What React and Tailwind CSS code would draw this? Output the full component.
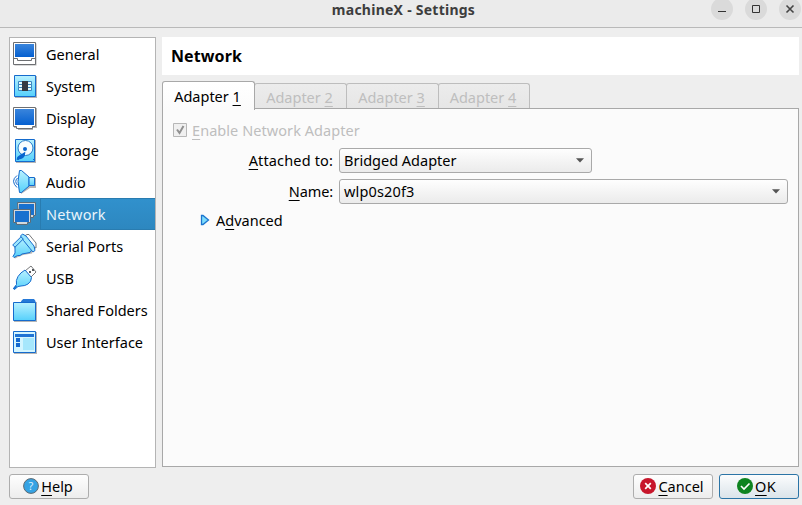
import React from "react";

function Gradients() {
  return (
    <svg width="0" height="0" className="absolute">
      <defs>
        <linearGradient id="cyan" x1="0" y1="0" x2="0" y2="1">
          <stop offset="0" stopColor="#b9f1ff" />
          <stop offset="1" stopColor="#55d0fb" />
        </linearGradient>
        <linearGradient id="blue" x1="0" y1="0" x2="0" y2="1">
          <stop offset="0" stopColor="#3a85dc" />
          <stop offset="1" stopColor="#0560d0" />
        </linearGradient>
      </defs>
    </svg>
  );
}

function Icon({ children }) {
  return (
    <svg width="26" height="26" viewBox="0 0 26 26" fill="none" className="ml-[2px] shrink-0">
      {children}
    </svg>
  );
}

const MonitorFull = () => (
  <Icon>
    <path d="M2.5 2.5h22v22h-22z" fill="#b5b5b5" />
    <path d="M1.5 1.5h22v22h-22z" fill="#fff" stroke="#6d6f72" />
    <path d="M3 3h19v13H3z" fill="url(#blue)" />
    <path d="M2 17.5h3.5v2h14v-2H23" stroke="#6d6f72" />
  </Icon>
);
const MonitorLow = () => (
  <Icon>
    <path d="M2 3h23v20h-4v2H6v-2H2z" fill="#b5b5b5" />
    <path d="M1.5 2.5h22v19h-3v2h-16v-2h-3z" fill="#fff" stroke="#6d6f72" />
    <path d="M3 4h19v16H3z" fill="url(#blue)" />
  </Icon>
);
const Chip = () => (
  <Icon>
    <path d="M3 3h22v22H3z" fill="#b5b5b5" />
    <path d="M2.5 2.5h21v21h-21z" fill="url(#cyan)" stroke="#156bcd" />
    <path d="M6.500 8.500h4v3h-4zm0 3h4v3h-4zm0 3h4v3h-4zM15.500 8.500h4v3h-4zm0 3h4v3h-4zm0 3h4v3h-4z" fill="#e6fbff" stroke="#3b86c0" />
    <path d="M10 8h6v10h-6z" fill="#353a43" />
  </Icon>
);
const Disk = () => (
  <Icon>
    <path d="M4 3h20v23H4z" fill="#b5b5b5" />
    <path d="M3.500 2.500h19v22h-19z" fill="url(#cyan)" stroke="#156bcd" />
    <circle cx="13.500" cy="11" r="7.500" fill="#f5fdff" stroke="#277ac9" />
    <circle cx="13" cy="12" r="2" fill="#0865cf" />
    <path d="M12.500 16c0 2-1 5.500-7 6 .5-3 3-3 7-6z" fill="#0865cf" stroke="#0865cf" strokeWidth="1.500" />
    <path d="M5 22.500h2m14 0h1" stroke="#156bcd" />
  </Icon>
);
const Speaker = () => (
  <Icon>
    <path d="M5 6.500Q-2 12 5 18.500M5.500 9Q2 12.500 5.500 16" stroke="#156bcd" />
    <path d="M8 3l9 6h7v10h-6L9 25z" fill="#b5b5b5" />
    <path d="M7.500 1.500h2l7.500 6.500v9L9.500 23.500h-2q-3-11 0-22z" fill="url(#cyan)" stroke="#156bcd" />
    <path d="M17 8.500h5.500v8H17z" fill="url(#cyan)" stroke="#156bcd" />
  </Icon>
);
const NetworkIcon = () => (
  <Icon>
    <path d="M5.500 1.500h18v13h-2v2h-15z" fill="#d3d8dc" stroke="#5a6b78" />
    <path d="M7 3h15v11H7z" fill="#1871cf" />
    <path d="M1.500 8.500h17v13h-3v2h-11v-2h-3z" fill="#d3d8dc" stroke="#5a6b78" />
    <path d="M3 10h14v11H3z" fill="#1871cf" />
  </Icon>
);
const Serial = () => (
  <Icon>
    <path d="M12.500 3l2.500-1.500h2l7 8.500v5l-3-1z" fill="#fff" stroke="#77797b" />
    <path d="M1 11.500L9.500 4l11 12-1.500 3.500-9 1.500-3 1.500-2 .5-3 1.500-1-1 2-3-.5-3z" fill="#b5b5b5" transform="translate(1 1)" />
    <path d="M3 13l7.500-8.500L20 16.500l-2 3-8 1.500-2 1.500H5.500l-3.500 2-1-1 2-3.500z" fill="url(#cyan)" stroke="#156bcd" />
    <path d="M8.500 3l2-2 3.500 2 8 10 1 4.500-2 1.500-3-3.500-6.500-8z" fill="#9ae6fd" stroke="#156bcd" />
    <path d="M.7 12L9 3.800l2.300 2.200L3 14.200z" fill="#9ae6fd" stroke="#156bcd" />
  </Icon>
);
const Usb = () => (
  <Icon>
    <path d="M13 6l6-5 5 6-6 6z" fill="#fff" stroke="#77797b" />
    <path d="M17 6h2v2h-2zm3-2h2v2h-2z" fill="#55585c" />
    <path d="M13 5l6.500 7.500q0 4-3.500 6.500-3 2-7 2l-3 .5-3.500 3-1-1 3-4q-1-4 1.500-8 2.500-4 7-6.500z" fill="url(#cyan)" stroke="#156bcd" />
    <path d="M1.500 24l3-3" stroke="#156bcd" strokeWidth="1.500" />
  </Icon>
);
const Folder = () => (
  <Icon>
    <path d="M2 5h23v20H2z" fill="#b5b5b5" />
    <path d="M9 5l2-3h11l1.500 2v3H9z" fill="#2679d7" />
    <path d="M1.500 5.500h22v18h-22z" fill="url(#cyan)" stroke="#156bcd" />
    <path d="M10 3h13v2H9z" fill="#2679d7" />
  </Icon>
);
const WindowIcon = () => (
  <Icon>
    <path d="M2 3h23v22H2z" fill="#b5b5b5" />
    <path d="M1.500 2.500h22v21h-22z" fill="#d3f5ff" stroke="#156bcd" />
    <path d="M3 5h19v3H3z" fill="#1f73d4" />
    <path d="M4 9h4v4H4zm0 5h4v4H4z" fill="#1469d0" />
    <path d="M11 9h11v12H11z" fill="#a6e7fc" />
  </Icon>
);

const ITEMS = [
  ["General", MonitorFull],
  ["System", Chip],
  ["Display", MonitorLow],
  ["Storage", Disk],
  ["Audio", Speaker],
  ["Network", NetworkIcon],
  ["Serial Ports", Serial],
  ["USB", Usb],
  ["Shared Folders", Folder],
  ["User Interface", WindowIcon],
];

function U({ children }) {
  return (
    <span className="underline decoration-1 underline-offset-[3px] [text-decoration-skip-ink:none]">
      {children}
    </span>
  );
}

function Combo({ children, className }) {
  return (
    <div className={"flex h-[25px] items-center justify-between rounded-[3px] border border-[#a9a9a9] bg-linear-to-b from-[#fefefe] to-[#ebebeb] pr-[7px] pb-[2px] pl-[4px] " + className}>
      {children}
      <svg width="8" height="5" viewBox="0 0 8 5" className="mt-[2px]">
        <path d="M0 .3h8L4 4.500z" fill="#555" />
      </svg>
    </div>
  );
}

function PushButton({ children, className }) {
  return (
    <button className={"flex h-[25px] w-[80px] items-center justify-center gap-[2px] rounded-[3px] border bg-linear-to-b pb-[2px] " + className}>
      {children}
    </button>
  );
}

export default function App() {
  return (
    <div className="flex h-[505px] w-[802px] flex-col overflow-hidden bg-[#eee] font-['Noto_Sans',sans-serif] text-[14.5px] leading-[20px] whitespace-nowrap text-black">
      <Gradients />
      <header className="relative flex h-[28px] shrink-0 items-start justify-center border-b border-[#b9b9b9] bg-[#ebebeb]">
        <span className="mr-[-5px] text-[14px] font-bold tracking-[0.25px] text-[#3d3d3d]">machineX - Settings</span>
        <div className="absolute top-[-2px] right-[1px] flex gap-[12px]">
          <svg width="22" height="22"><circle cx="11" cy="11" r="11" fill="#dadada" /><path d="M7 13.500h8" stroke="#333" /></svg>
          <svg width="22" height="22"><circle cx="11" cy="11" r="11" fill="#dadada" /><path d="M7.500 7.500h7v7h-7z" stroke="#333" fill="none" /></svg>
          <svg width="22" height="22"><circle cx="11" cy="11" r="11" fill="#dadada" /><path d="M7.500 7.500l7 7m0-7l-7 7" stroke="#444" strokeWidth="1.600" /></svg>
        </div>
      </header>

      <main className="flex h-[440px] shrink-0 gap-[6px] pt-[9px] pr-[3px] pl-[9px]">
        <nav className="w-[147px] shrink-0 border border-[#b4b4b4] bg-white">
          {ITEMS.map(([label, Glyph]) => {
            const selected = label === "Network";
            return (
              <div key={label} className={"flex h-[32px] items-center " + (selected ? "bg-linear-to-b from-[#3191cd] to-[#2d87bf] tracking-[0.2px] text-[#e9f4fb]" : "")}>
                <Glyph />
                <span className={"flex h-full items-center " + (selected ? "ml-[2px] flex-1 border border-r-0 border-[#297cb0] pl-[5px]" : "pl-[8px]")}>{label}</span>
              </div>
            );
          })}
        </nav>

        <section className="flex flex-1 flex-col pb-[1px]">
          <h1 className="flex h-[38px] shrink-0 items-center bg-white pl-[9px] text-[16px] font-bold tracking-[0.1px]">Network</h1>
          <div className="mt-[6px] flex h-[28px] shrink-0 items-end">
            <div className="z-10 mb-[-1px] flex h-[29px] w-[93px] items-center justify-center rounded-t-[3px] border border-b-0 border-[#a8a8a8] bg-linear-to-b from-white to-[#fbfbfb] pr-[2px] pb-[1px]">
              <span>Adapter <U>1</U></span>
            </div>
            {["2", "3", "4"].map((n) => (
              <div key={n} className={"mb-[1px] ml-[-1px] flex h-[25px] items-center justify-center rounded-t-[3px] border border-b-0 border-[#bdbdbd] bg-linear-to-b from-[#ececec] to-[#e6e6e6] pt-[1px] pr-[2px] text-[#bebebe] " + (n === "4" ? "w-[92px]" : "w-[93px]")}>
                <span>Adapter <U>{n}</U></span>
              </div>
            ))}
          </div>
          <div className="mt-[-1px] flex flex-1 flex-col items-start border border-[#a8a8a8] bg-[#fbfbfb] pl-[10px]">
            <div className="mt-[11px] flex h-[20px] items-center gap-[5px] tracking-[0.06px] text-[#bebebe]">
              <svg width="14" height="14"><path d="M.5.5h13v13H.5z" fill="#f0f0f0" stroke="#b7b7b7" /><path d="M4 6.500l2.500 3.500L10.500 3" fill="none" stroke="#909090" strokeWidth="2" /></svg>
              <span><U>E</U>nable Network Adapter</span>
            </div>
            <div className="mt-[8px] flex h-[25px] items-center">
              <span className="w-[160px] pb-[2px] text-right tracking-[0.15px]"><U>A</U>ttached to:</span>
              <Combo className="ml-[6px] w-[253px]">Bridged Adapter</Combo>
            </div>
            <div className="mt-[6px] flex h-[25px] items-center">
              <span className="w-[160px] pb-[2px] text-right tracking-[-0.1px]"><U>N</U>ame:</span>
              <Combo className="ml-[6px] w-[449px] tracking-[0.15px]">wlp0s20f3</Combo>
            </div>
            <div className="mt-[6px] ml-[27px] flex h-[20px] items-center gap-[6px]">
              <svg width="10" height="12"><path d="M1.500 1.500h1.500L8.500 6 3 10.500H1.500z" fill="#7edcfb" stroke="#1b74cf" strokeWidth="1.300" /></svg>
              <span>A<U>d</U>vanced</span>
            </div>
          </div>
        </section>
      </main>

      <footer className="flex pt-[6px] pr-[3px] pl-[9px]">
        <PushButton className="border-[#adadad] from-[#fefefe] to-[#ededed] pr-[2px]">
          <svg width="16" height="16"><circle cx="8" cy="8" r="7.400" fill="#35a3e4" stroke="#5f6970" /><text x="8" y="12" fill="#d9f1ff" fontSize="11" textAnchor="middle">?</text></svg>
          <span><U>H</U>elp</span>
        </PushButton>
        <div className="ml-auto flex gap-[6px]">
          <PushButton className="border-[#adadad] from-[#fefefe] to-[#ededed] pr-[2px]">
            <svg width="16" height="16"><circle cx="8" cy="8" r="8" fill="#c7162b" /><path d="M5.200 5.200l5.600 5.600m0-5.600l-5.600 5.600" stroke="#fff" strokeWidth="1.700" /></svg>
            <span><U>C</U>ancel</span>
          </PushButton>
          <PushButton className="border-[#2b74a6] from-[#fbfcfd] to-[#dbe4ea] pr-[5px]">
            <svg width="16" height="16"><circle cx="8" cy="8" r="8" fill="#0e8420" /><path d="M4 8l3 3 5.500-5.500" fill="none" stroke="#fff" strokeWidth="1.600" /></svg>
            <span className="tracking-[0.3px]"><U>O</U>K</span>
          </PushButton>
        </div>
      </footer>
    </div>
  );
}
